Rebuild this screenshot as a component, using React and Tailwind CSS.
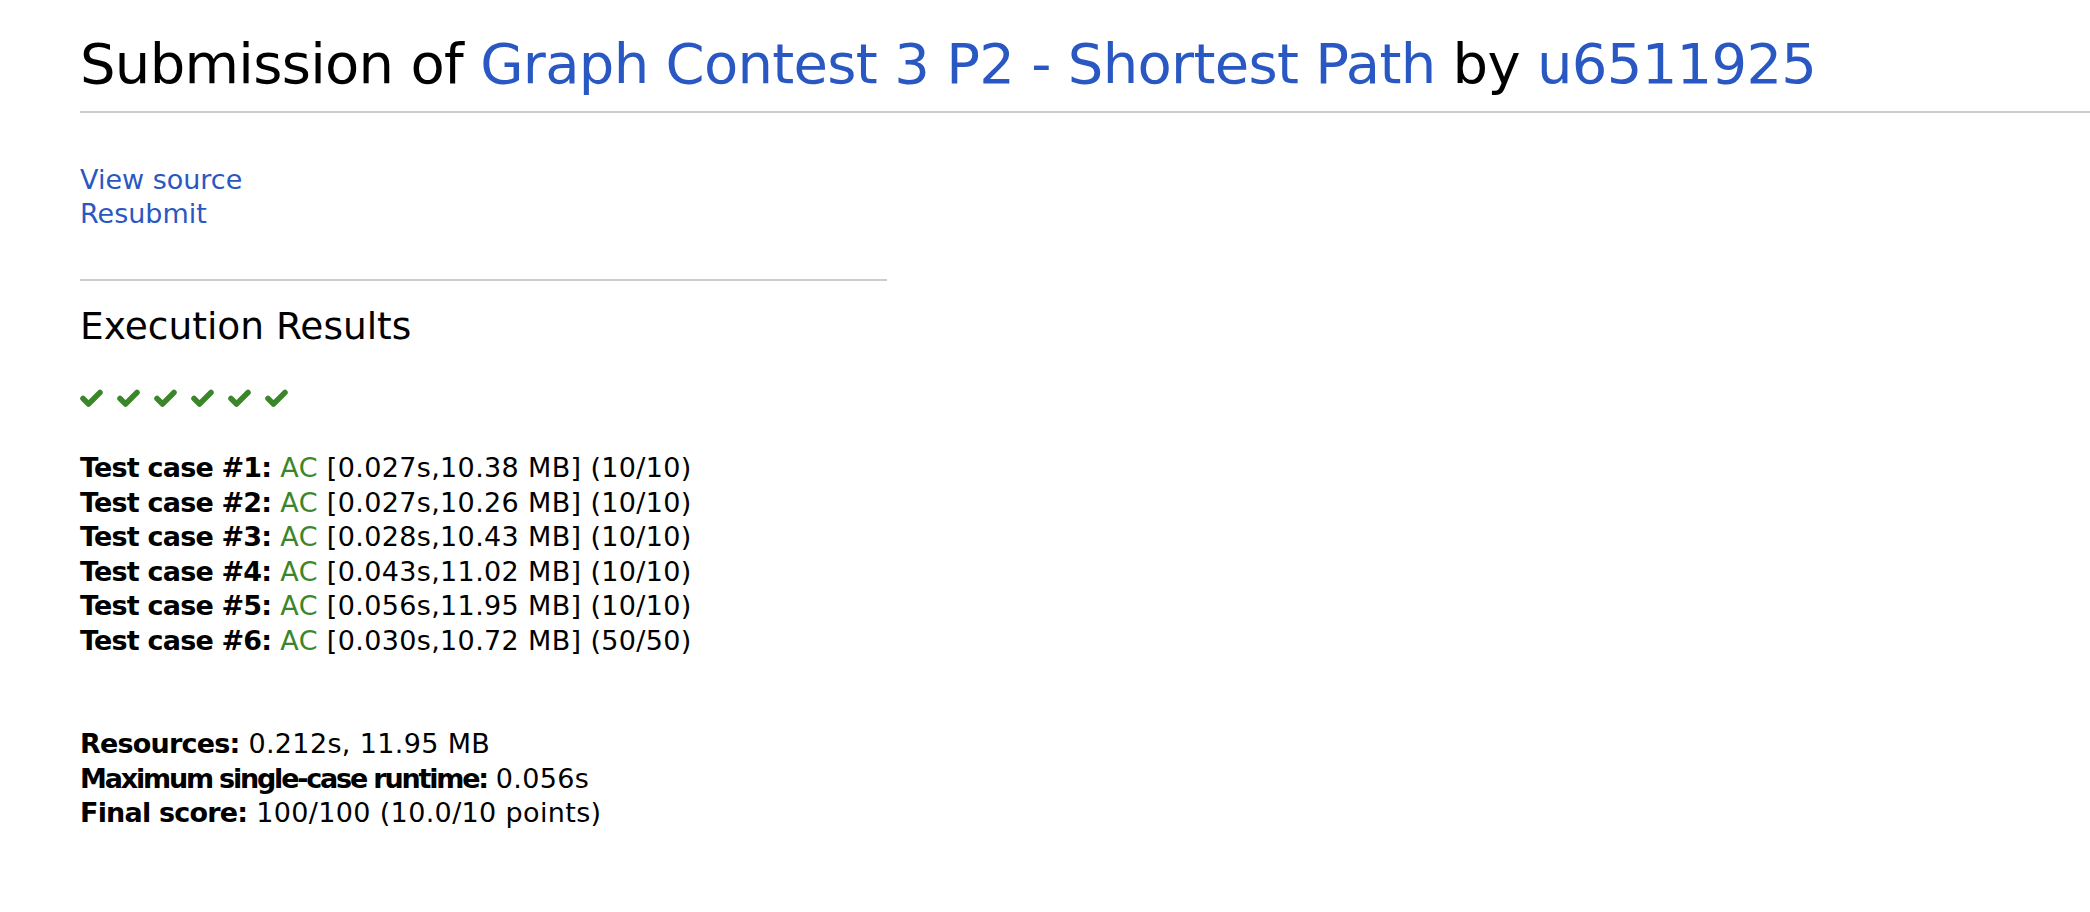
import React from "react";

const cases = [
  { n: 1, time: "0.027s", mem: "10.38 MB", pts: "10/10" },
  { n: 2, time: "0.027s", mem: "10.26 MB", pts: "10/10" },
  { n: 3, time: "0.028s", mem: "10.43 MB", pts: "10/10" },
  { n: 4, time: "0.043s", mem: "11.02 MB", pts: "10/10" },
  { n: 5, time: "0.056s", mem: "11.95 MB", pts: "10/10" },
  { n: 6, time: "0.030s", mem: "10.72 MB", pts: "50/50" },
];

function Check() {
  return (
    <svg width="23" height="18" viewBox="0 0 23 18" className="shrink-0">
      <polyline
        points="3,9.5 8.5,15 20,3.5"
        fill="none"
        stroke="#3b862a"
        strokeWidth="5.5"
        strokeLinecap="round"
        strokeLinejoin="round"
      />
    </svg>
  );
}

function Label({ tight, children }) {
  return <b className={tight ? "tracking-[-2.2px]" : "tracking-[-0.8px]"}>{children}</b>;
}

export default function App() {
  return (
    <div className="min-h-screen bg-white text-black font-['DejaVu_Sans',sans-serif]">
      <div className="pl-[80px] pt-[29px]">
        <h2 className="text-[56px] leading-[70px] font-normal tracking-[-0.7px]">
          Submission of{" "}
          <a href="#" className="text-[#2a58c2]">
            Graph Contest 3 P2 - Shortest Path
          </a>{" "}
          by{" "}
          <a href="#" className="text-[#2a58c2]">
            u6511925
          </a>
        </h2>
        <div className="mt-[12px] h-[2px] bg-[#cccccc]" />
      </div>

      <div className="pl-[80px]">
        <div className="mt-[50px] flex flex-col text-[27px] leading-[34px] text-[#2a58c2]">
          <a href="#">View source</a>
          <a href="#">Resubmit</a>
        </div>

        <div className="mt-[48px] h-[2px] w-[807px] bg-[#cccccc]" />

        <h3 className="mt-[23px] text-[37.5px] leading-[44px] font-normal">Execution Results</h3>

        <div className="mt-[41px] flex gap-[14px]">
          {cases.map((c) => (
            <Check key={c.n} />
          ))}
        </div>

        <div className="mt-[44px] text-[27px] leading-[34.5px] tracking-[0.35px]">
          {cases.map((c) => (
            <div key={c.n}>
              <Label>Test case #{c.n}:</Label> <span className="text-[#3b862a]">AC</span> [{c.time},{c.mem}] ({c.pts})
            </div>
          ))}
        </div>

        <div className="mt-[69px] text-[27px] leading-[34.5px] tracking-[0.35px]">
          <div>
            <Label>Resources:</Label> 0.212s, 11.95 MB
          </div>
          <div>
            <Label tight>Maximum single-case runtime:</Label> 0.056s
          </div>
          <div>
            <Label>Final score:</Label> 100/100 (10.0/10 points)
          </div>
        </div>
      </div>
    </div>
  );
}
